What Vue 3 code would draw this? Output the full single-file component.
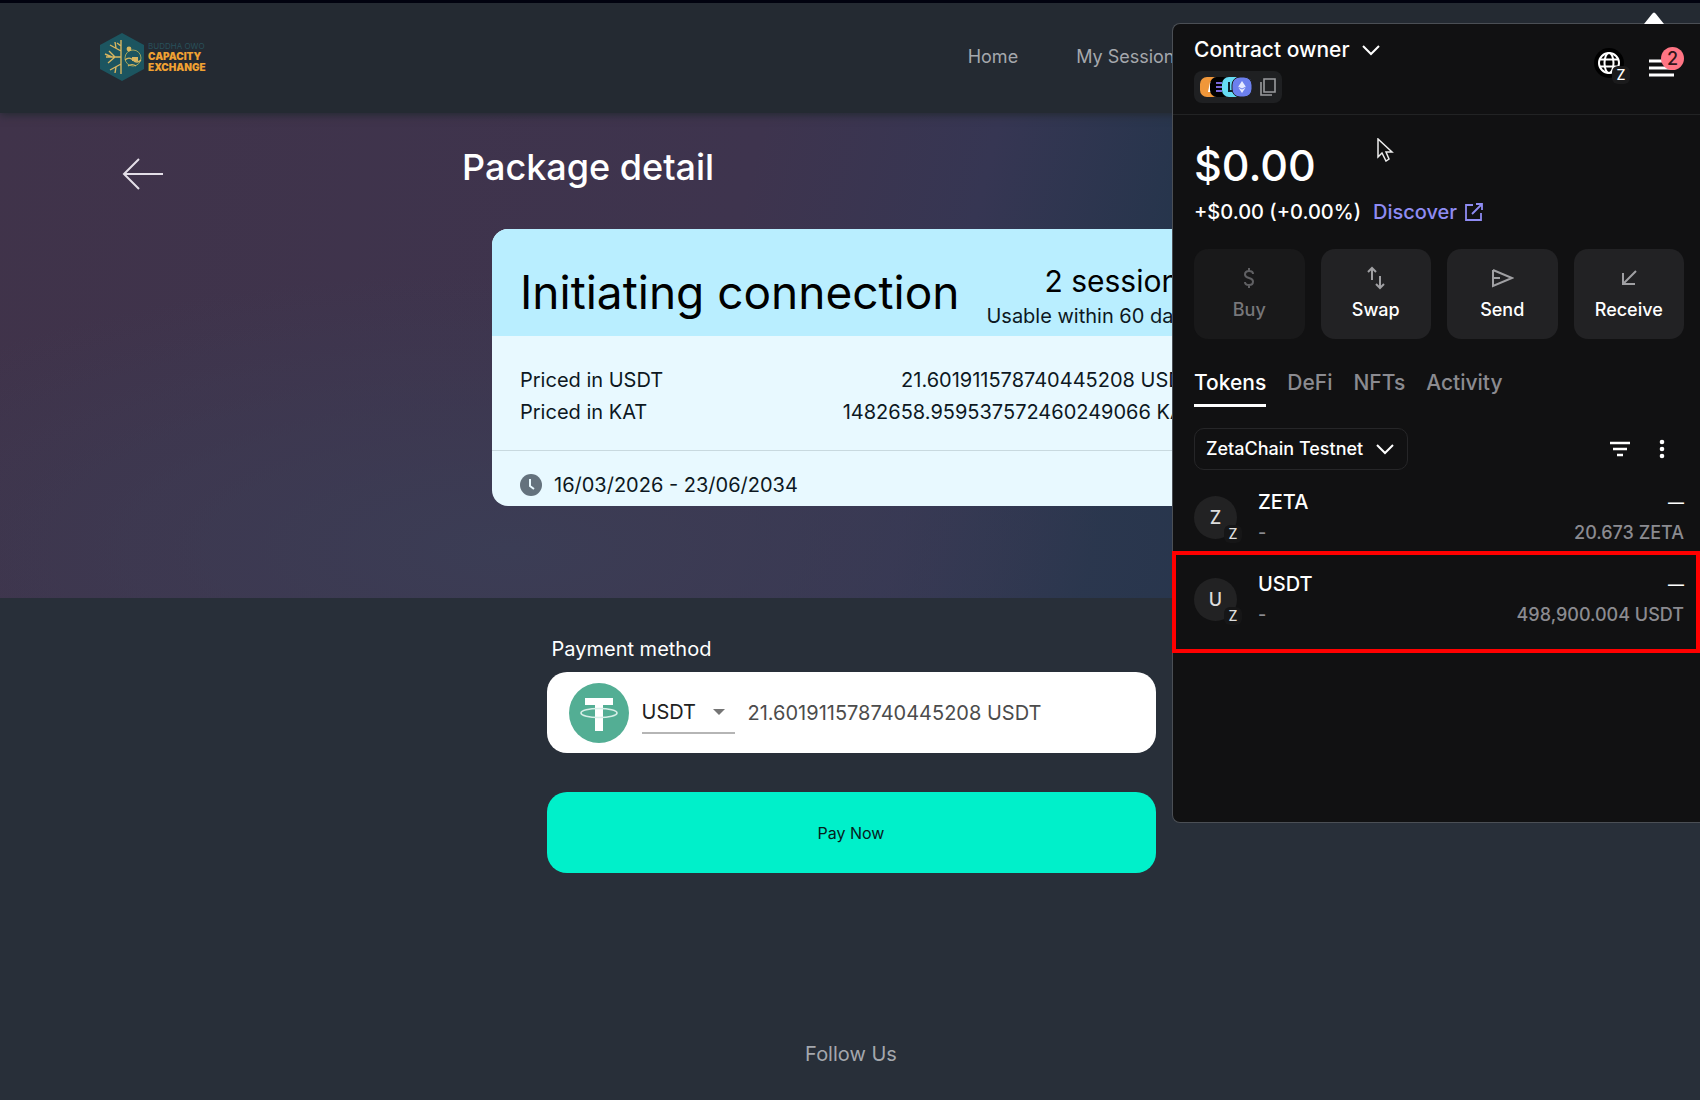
<template>
  <div class="page">
    <header class="header">
      <a href="#" class="logo" aria-label="Capacity Exchange">
        <svg class="logo-mark" viewBox="0 0 44 48">
          <path d="M22 0 L44 12 V36 L22 48 L0 36 V12Z" fill="#1c5560" />
          <g fill="none" stroke="#d8b660" stroke-width="1.4">
            <path d="M21 7V41M21 24H6M21 18L10 12M21 31L10 37M15 24L9 18M15 24L8 30M16 15L15 9M16 34L15 40M12 24L5 21M21 13L17 10" />
            <circle cx="33" cy="25" r="8" stroke="#a3a45a" stroke-width="1" />
            <path d="M25 27q4-4 8 0t8 0M28 33q4-3 8 0" stroke-width="1.2" />
          </g>
          <circle cx="29" cy="16" r="2.4" fill="#d8b660" />
          <path d="M32 24h6v4h-6z" fill="#d8b660" />
        </svg>
        <span class="logo-text">
          <small>BUDDHA OWO</small>
          <strong>CAPACITY</strong>
          <strong>EXCHANGE</strong>
        </span>
      </a>
      <nav class="nav">
        <a v-for="item in navItems" :key="item" href="#">{{ item }}</a>
      </nav>
    </header>

    <section class="hero">
      <button class="back" aria-label="Back">
        <svg viewBox="0 0 42 32"><path d="M41 16H2M17 1L2 16L17 31" /></svg>
      </button>
      <div class="detail">
        <h1>Package detail</h1>
        <article class="card">
          <div class="card-head">
            <h2>Initiating connection</h2>
            <div class="sessions">
              <span class="count">2 sessions</span>
              <span>Usable within 60 days</span>
            </div>
          </div>
          <dl class="prices">
            <div v-for="price in prices" :key="price.unit">
              <dt>Priced in {{ price.unit }}</dt>
              <dd>{{ price.amount }} {{ price.unit }}</dd>
            </div>
          </dl>
          <div class="dates">
            <svg viewBox="0 0 22 22">
              <circle cx="11" cy="11" r="11" fill="#64727d" />
              <path d="M10 5V12L14 15" fill="none" stroke="#e8f9ff" stroke-width="2" />
            </svg>
            16/03/2026 - 23/06/2034
          </div>
        </article>
      </div>
    </section>

    <main class="payment">
      <label for="method">Payment method</label>
      <div class="method">
        <svg class="tether" viewBox="0 0 60 60">
          <circle cx="30" cy="30" r="30" fill="#53ae94" />
          <path d="M16 15H44V22H34V48H26V22H16Z" fill="#fff" />
          <ellipse cx="30" cy="30" rx="18" ry="4.5" fill="none" stroke="#d6eee7" stroke-width="1.6" />
        </svg>
        <div class="select">
          <select id="method" v-model="method">
            <option>USDT</option>
            <option>KAT</option>
          </select>
          <svg viewBox="0 0 12 6"><path d="M0 0H12L6 6Z" fill="#757575" /></svg>
        </div>
        <span class="amount">{{ selected.amount }} {{ selected.unit }}</span>
      </div>
      <button class="pay">Pay Now</button>
    </main>

    <footer class="footer">Follow Us</footer>

    <aside class="wallet">
      <svg class="pointer" viewBox="0 0 20 12"><path d="M0 12L8 2Q10 -1 12 2L20 12Z" fill="#fff" /></svg>
      <div class="wallet-head">
        <div>
          <button class="account">
            Contract owner
            <svg class="chevron" viewBox="0 0 18 12"><path d="M1 2L9 10L17 2" /></svg>
          </button>
          <button class="networks" aria-label="Copy address">
            <svg class="coins" viewBox="0 0 52 20">
              <rect width="20" height="20" rx="7" fill="#f0973a" />
              <path d="M8 15L10 5H12V15Z" fill="#fff" />
              <rect x="10" width="20" height="20" rx="7" fill="#000" />
              <path d="M16 6h6M16 10h6M16 14h6" stroke="#7a68d8" stroke-width="2" />
              <rect x="22" width="20" height="20" rx="7" fill="#66dcf5" />
              <path d="M29 5V14H33" fill="none" stroke="#10222c" stroke-width="2" />
              <rect x="32" width="20" height="20" rx="8" fill="#6c80ee" stroke="#202124" />
              <path d="M42 4L46 10L42 16L38 10Z" fill="#e6eaff" />
              <path d="M38 10L42 12L46 10" fill="none" stroke="#6c80ee" />
            </svg>
            <svg class="copy" viewBox="0 0 16 18">
              <path d="M4 1H15V14H4ZM1 4V17H12" />
            </svg>
          </button>
        </div>
        <div class="wallet-tools">
          <button class="globe" aria-label="Network">
            <svg viewBox="0 0 30 30">
              <circle cx="15" cy="15" r="15" fill="#000" />
              <g fill="none" stroke="#fff" stroke-width="2">
                <circle cx="15" cy="15" r="10" />
                <ellipse cx="15" cy="15" rx="4.5" ry="10" />
                <path d="M6 11.5H24M6 18.5H24" />
              </g>
            </svg>
            <span class="mini">Z</span>
          </button>
          <button class="menu" aria-label="Menu">
            <svg viewBox="0 0 25 18"><path d="M0 2H25M0 9H25M0 16H25" /></svg>
            <span class="badge">2</span>
          </button>
        </div>
      </div>

      <div class="wallet-body">
        <div class="balance">$0.00</div>
        <div class="change">
          +$0.00 (+0.00%)
          <a href="#">
            Discover
            <svg viewBox="0 0 18 18"><path d="M8 2H1V17H16V10M11 1H17V7M17 1L7 11" /></svg>
          </a>
        </div>

        <div class="actions">
          <button v-for="action in actions" :key="action.label" :disabled="action.disabled">
            <svg viewBox="0 0 24 24"><path :d="action.icon" /></svg>
            {{ action.label }}
          </button>
        </div>

        <div class="tabs" role="tablist">
          <button
            v-for="tab in tabs"
            :key="tab"
            role="tab"
            :aria-selected="tab === activeTab"
            :class="{ active: tab === activeTab }"
            @click="activeTab = tab"
          >{{ tab }}</button>
        </div>

        <div class="filters">
          <button class="network">
            ZetaChain Testnet
            <svg class="chevron" viewBox="0 0 18 12"><path d="M1 2L9 10L17 2" /></svg>
          </button>
          <button class="tool" aria-label="Sort">
            <svg viewBox="0 0 22 22"><path d="M1 5H21M4 11H18M8 17H14" stroke="#fff" stroke-width="2.4" /></svg>
          </button>
          <button class="tool" aria-label="More">
            <svg viewBox="0 0 22 22" fill="#fff">
              <circle cx="11" cy="4" r="2.3" /><circle cx="11" cy="11" r="2.3" /><circle cx="11" cy="18" r="2.3" />
            </svg>
          </button>
        </div>
      </div>

      <ul class="tokens">
        <li v-for="token in tokens" :key="token.name" :class="{ highlight: token.highlight }">
          <span class="avatar">{{ token.name[0] }}<span class="mini">Z</span></span>
          <span class="token-name">{{ token.name }}<small>-</small></span>
          <span class="token-value"><span class="fiat">—</span><small>{{ token.amount }} {{ token.name }}</small></span>
        </li>
      </ul>

      <svg class="cursor" viewBox="0 0 17 24">
        <path d="M1 1V19L5 15L9 23L12 21L9 14H15Z" fill="#111" stroke="#eee" stroke-width="1.5" />
      </svg>
    </aside>
  </div>
</template>

<script setup>
import { ref, computed } from 'vue'

const navItems = ['Home', 'My Sessions']

const prices = [
  { unit: 'USDT', amount: '21.601911578740445208' },
  { unit: 'KAT', amount: '1482658.959537572460249066' }
]
const method = ref('USDT')
const selected = computed(() => prices.find(p => p.unit === method.value))

const actions = [
  { label: 'Buy', disabled: true, icon: 'M16 8Q16 5 12 5T8 8.5Q8 11 12 12T16 15.5Q16 19 12 19T8 16M12 2V5M12 19V22' },
  { label: 'Swap', icon: 'M8 14V2M4 6L8 2L12 6M16 10V22M12 18L16 22L20 18' },
  { label: 'Send', icon: 'M3 4L22 12L3 20V4M3 12H10' },
  { label: 'Receive', icon: 'M19 5L6 18M6 7V18H18' }
]

const tabs = ['Tokens', 'DeFi', 'NFTs', 'Activity']
const activeTab = ref('Tokens')

const tokens = [
  { name: 'ZETA', amount: '20.673' },
  { name: 'USDT', amount: '498,900.004', highlight: true }
]
</script>

<style>
body { margin: 0; background: #282f39; }
</style>

<style scoped>
.page {
  position: relative; min-height: 100vh; overflow: hidden;
  display: flex; flex-direction: column; box-sizing: border-box;
  border-top: 3px solid #01020f;
  background: #282f39; color: #fff;
  font: 20px/24px Inter, 'Liberation Sans', sans-serif;
}
button, select { font: inherit; color: inherit; background: none; border: 0; padding: 0; cursor: pointer; }
svg { display: block; flex-shrink: 0; }
a { color: inherit; text-decoration: none; }

.header {
  position: relative; z-index: 1;
  display: flex; align-items: center; justify-content: space-between;
  height: 110px; padding: 0 516px 2px 100px; box-sizing: border-box;
  background: #242a32; box-shadow: 0 2px 8px #242a32;
}
.logo { display: flex; align-items: center; gap: 4px; }
.logo-mark { width: 44px; height: 48px; }
.logo-text { display: flex; flex-direction: column; }
.logo-text small { font-size: 8px; line-height: 10px; color: #28505a; }
.logo-text strong { font-size: 10px; line-height: 11px; font-weight: 900; color: #f0a132; }
.nav { display: flex; gap: 58px; font-size: 18px; color: #a5a8ad; }

.hero {
  position: relative; height: 485px; padding-left: 4px;
  display: flex; justify-content: center;
  background:
    radial-gradient(ellipse at 30% 90%, #3b3d55 0%, transparent 45%),
    linear-gradient(104deg, #40334a 0%, #3e344e 42%, #363653 55%, #26354c 66%, #26354c 100%);
}
.back { position: absolute; left: 122px; top: 45px; width: 42px; height: 32px; }
.back path { fill: none; stroke: #e4dfe8; stroke-width: 2; }
.detail { width: 720px; padding-top: 32px; }
h1 { margin: 0 0 40px -30px; font-size: 36px; line-height: 44px; font-weight: 500; }
.card { border-radius: 16px; overflow: hidden; background: #e8f9ff; color: #0d1822; }
.card-head {
  display: flex; justify-content: space-between; align-items: flex-end;
  height: 107px; padding: 0 17px 8px 28px; box-sizing: border-box;
  background: #b9eeff;
}
h2 { margin: 0 0 8px; font-size: 46px; line-height: 56px; font-weight: 400; color: #000; white-space: nowrap; }
.sessions { display: flex; flex-direction: column; align-items: flex-end; gap: 7px; white-space: nowrap; }
.count { font-size: 30px; line-height: 32px; color: #000; }
.prices { margin: 0; padding: 28px 17px 22px 28px; }
.prices div { display: flex; justify-content: space-between; line-height: 32px; }
.prices dd { margin: 0; }
.dates {
  display: flex; align-items: center; gap: 12px;
  padding: 22px 28px 9px; border-top: 1px solid #c8d9df;
}
.dates svg { width: 22px; height: 22px; }

.payment { width: 609px; margin: 0 auto; padding: 39px 0 0 2px; display: flex; flex-direction: column; }
.payment label { margin: 0 0 11px 5px; }
.method {
  display: flex; align-items: center; height: 81px; padding: 0 22px;
  border-radius: 20px; background: #fff; box-sizing: border-box;
}
.tether { width: 60px; height: 60px; }
.select {
  display: flex; align-items: center; width: 93px; height: 42px;
  margin: 0 13px; border-bottom: 2px solid #b5b5b5; box-sizing: border-box;
}
.select select { flex: 1; width: 100%; appearance: none; color: #212121; }
.select svg { width: 12px; height: 6px; margin-right: 10px; pointer-events: none; }
.amount { color: #4c4c4c; }
.pay {
  height: 81px; margin-top: 39px; border-radius: 20px;
  background: #00f0ca; color: #06201c; font-size: 16px;
}
.footer { margin-top: 169px; padding-left: 2px; text-align: center; color: #a4a7ad; }

.wallet {
  position: absolute; z-index: 2; top: 20px; right: 0; width: 528px; min-height: 800px;
  box-sizing: border-box; border: 1px solid #4b4f55; border-right: 0;
  border-radius: 8px 0 0 8px; background: #111112; font-weight: 500;
}
.pointer { position: absolute; top: -12px; right: 36px; width: 20px; height: 12px; }
.wallet-head {
  display: flex; justify-content: space-between; height: 91px;
  padding: 14px 26px 0 21px; box-sizing: border-box; border-bottom: 1px solid #222324;
}
.account { display: flex; align-items: center; gap: 12px; font-size: 21px; line-height: 24px; }
.chevron { width: 18px; height: 12px; }
.chevron path { fill: none; stroke: #fff; stroke-width: 2; }
.networks {
  display: flex; align-items: center; gap: 8px; margin-top: 9px;
  width: 88px; height: 32px; padding: 0 6px; border-radius: 8px; background: #1f2022;
}
.coins { width: 52px; height: 20px; }
.copy { width: 16px; height: 18px; }
.copy path { fill: none; stroke: #9a9b9e; stroke-width: 1.6; }
.wallet-tools { display: flex; gap: 25px; padding-top: 10px; align-items: flex-start; }
.globe { position: relative; width: 30px; height: 30px; }
.mini {
  position: absolute; right: -6px; bottom: -6px; width: 18px; height: 18px;
  border-radius: 6px; background: #1b1b1c; font-size: 14px; line-height: 18px; text-align: center;
}
.menu { position: relative; width: 25px; height: 30px; padding-top: 9px; }
.menu svg { width: 25px; height: 18px; }
.menu path { stroke: #fff; stroke-width: 3; }
.badge {
  position: absolute; right: -10px; top: -1px; width: 23px; height: 23px;
  border-radius: 50%; background: #ff7584; color: #33151a; font-size: 18px; line-height: 23px;
}

.wallet-body { padding: 24px 16px 0 21px; }
.balance { font-size: 43px; line-height: 52px; }
.change { display: flex; gap: 12px; margin-top: 9px; line-height: 24px; }
.change a { display: flex; align-items: center; gap: 8px; color: #8f8cf3; }
.change a svg { width: 18px; height: 18px; }
.change path { fill: none; stroke: #8f8cf3; stroke-width: 1.8; }
.actions { display: grid; grid-template-columns: repeat(4, 1fr); gap: 16px; margin-top: 25px; }
.actions button {
  display: flex; flex-direction: column; align-items: center; gap: 8px;
  height: 90px; padding-top: 17px; border-radius: 14px; background: #222224;
  font-size: 18px; line-height: 24px;
}
.actions button:disabled { background: #19191a; color: #77777a; }
.actions svg { width: 24px; height: 24px; }
.actions path { fill: none; stroke: #a0a0a3; stroke-width: 2; }
.actions button:disabled path { stroke: #606063; }
.tabs { display: flex; gap: 21px; margin-top: 32px; font-size: 21px; }
.tabs button { padding-bottom: 9px; border-bottom: 3px solid transparent; color: #8b8b90; }
.tabs button.active { color: #fff; border-color: #fff; }
.filters { display: flex; align-items: center; gap: 20px; margin-top: 21px; padding-right: 11px; }
.network {
  display: flex; align-items: center; justify-content: space-between;
  width: 214px; height: 42px; margin-right: auto; padding: 0 13px 0 11px;
  border: 1px solid #262628; border-radius: 10px; font-size: 18px; box-sizing: border-box;
}
.tool, .tool svg { width: 22px; height: 22px; }

.tokens { list-style: none; margin: 0; padding: 0; }
.tokens li {
  display: flex; align-items: flex-start; height: 81px;
  padding: 19px 16px 0 21px; box-sizing: border-box;
}
.tokens li.highlight { height: 102px; padding: 16px 12px 0 18px; margin-left: -1px; border: 4px solid #ff0000; }
.avatar {
  position: relative; width: 43px; height: 43px; margin: 7px 21px 0 0;
  border-radius: 50%; background: #222223; color: #ddd;
  font-size: 18px; line-height: 43px; text-align: center;
}
.avatar .mini { right: -5px; bottom: -4px; background: #161617; }
.token-name, .token-value { display: flex; flex-direction: column; line-height: 26px; }
.token-value { margin-left: auto; text-align: right; }
.fiat { font-size: 16px; }
.tokens small { margin-top: 5px; font-size: 18px; line-height: 26px; color: #8b8b90; }
.cursor { position: absolute; left: 204px; top: 114px; width: 17px; height: 24px; }
</style>
